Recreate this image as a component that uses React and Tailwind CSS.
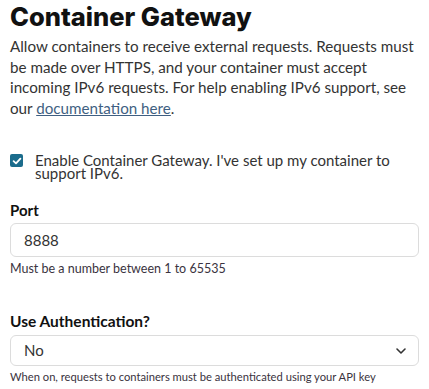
export default function App() {
  return (
    <div className="w-[429px] h-[389px] bg-white overflow-hidden px-[10px] pt-[2px] text-[#2d2d33]" style={{ fontFamily: "Lato, 'Noto Sans', sans-serif" }}>
      <h1 className="text-[25.5px] leading-[30px] font-extrabold text-[#111]" style={{ fontFamily: "Inter, sans-serif" }}>Container Gateway</h1>
      <p className="mt-[4px] text-[15.2px] leading-[20.5px] text-[#333]">
        Allow containers to receive external requests. Requests must be made over HTTPS, and your container must accept incoming IPv6 requests. For help enabling IPv6 support, see our{" "}
        <a className="inline-block leading-[18px] underline text-[#3f5f82]" href="#">documentation here</a>.
      </p>
      <label className="mt-[36px] flex items-start gap-[12px]">
        <span className="mt-[0px] w-[13px] h-[13px] rounded-[2px] bg-[#1b6c8c] flex items-center justify-center shrink-0">
          <svg width="10" height="10" viewBox="0 0 10 10" fill="none">
            <path d="M1.6 5.2 L4 7.4 L8.4 2.6" stroke="white" strokeWidth="1.8" strokeLinecap="round" strokeLinejoin="round" />
          </svg>
        </span>
        <span className="text-[15px] leading-[12.5px] text-[#333]">Enable Container Gateway. I've set up my container to support IPv6.</span>
      </label>
      <div className="mt-[23px] text-[15px] font-bold leading-[16px] text-[#111]">Port</div>
      <div className="mt-[5px] h-[34px] rounded-[6px] border border-[#dcdcdc] flex items-center px-[13px] text-[15px] text-[#333]">8888</div>
      <div className="mt-[5px] text-[12.5px] leading-[13px] text-[#3a3340]">Must be a number between 1 to 65535</div>
      <div className="mt-[37px] text-[15.5px] font-bold leading-[18px] text-[#111]">Use Authentication?</div>
      <div className="mt-[5px] h-[31px] rounded-[6px] border border-[#dcdcdc] flex items-center justify-between pl-[13px] pr-[10px] text-[15px] text-[#333]">
        <span>No</span>
        <svg width="14" height="14" viewBox="0 0 14 14" fill="none">
          <path d="M3 5 L7 9 L11 5" stroke="#333" strokeWidth="1.6" strokeLinecap="round" strokeLinejoin="round" />
        </svg>
      </div>
      <div className="mt-[4px] text-[11.2px] leading-[13px] text-[#3a3340]">When on, requests to containers must be authenticated using your API key</div>
    </div>
  );
}
